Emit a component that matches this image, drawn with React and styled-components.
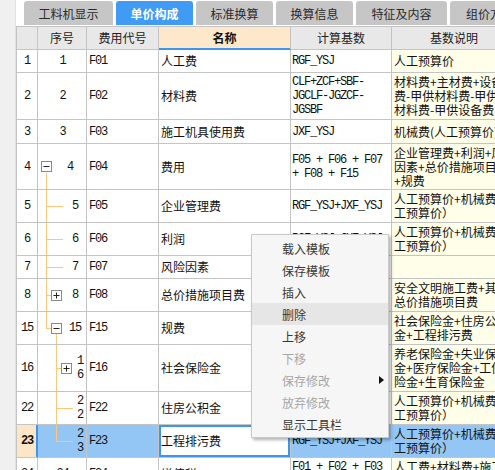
import React from 'react';
import styled, { createGlobalStyle, css } from 'styled-components';

const LINE = '#c4c4c4';
const TREE = '#fcc777';
const BLUE = '#3d95ee';
const MONO = '"Liberation Mono", "DejaVu Sans Mono", monospace';
const CJK = '"Noto Sans CJK SC", "Noto Sans", sans-serif';

const GlobalStyle = createGlobalStyle`
  html, body { margin: 0; padding: 0; background: #fff; }
  body { font-family: ${CJK}; font-size: 12px; color: #111; }
  * { box-sizing: border-box; }
`;

const Page = styled.div`
  position: relative;
  width: 495px;
  height: 470px;
  overflow: hidden;
  display: flex;
  background: #fff;
  font-family: ${CJK};
  font-size: 12px;
  color: #111;
`;

const Side = styled.div`
  flex: none;
  width: 16px;
  background: #f0f0f0;
  border-right: 1px solid #e3e3e3;
`;

const Main = styled.div`
  flex: 1;
  min-width: 0;
  overflow: hidden;
  display: flex;
  flex-direction: column;
`;

const TabBar = styled.div`
  flex: none;
  height: 26px;
  display: flex;
  gap: 3px;
  padding: 1px 0 1px 8px;
`;

const Tab = styled.div`
  flex: none;
  width: ${p => p.$w}px;
  display: flex;
  align-items: center;
  justify-content: center;
  white-space: nowrap;
  border-radius: 3px 3px 0 0;
  background: ${p => (p.$active ? '#3f9bf4' : '#c6c6c6')};
  color: ${p => (p.$active ? '#fff' : '#2a2a2a')};
  font-weight: ${p => (p.$active ? 700 : 400)};
`;

const Grid = styled.div`
  flex: none;
  width: max-content;
  border-top: 1px solid ${LINE};
  border-left: 1px solid ${LINE};
`;

const Row = styled.div`
  display: grid;
  grid-template-columns: 21px 49px 72px 132px 101px 125px;
  height: ${p => p.$h}px;
  background: ${p => (p.$selected ? '#93c6f4' : '#fff')};
`;

const Cell = styled.div`
  min-width: 0;
  overflow: hidden;
  display: flex;
  align-items: center;
  border-right: 1px solid ${LINE};
  border-bottom: 1px solid ${LINE};
  line-height: 14px;
`;

const HeadCell = styled(Cell)`
  justify-content: center;
  background: #e8e8e8;
  color: #222;
  ${p =>
    p.$focus &&
    css`
      background: #fde8cb;
      font-weight: 700;
      color: #111;
      border-bottom-color: ${BLUE};
      box-shadow: inset 0 -1px 0 ${BLUE};
    `}
`;

const monoText = css`
  font-family: ${MONO};
  font-size: 12px;
  letter-spacing: -1.2px;
`;

const RowNumCell = styled(Cell)`
  justify-content: center;
  ${monoText}
  ${p =>
    p.$selected &&
    css`
      background: #fde6c6;
      font-weight: 700;
      border-right-color: ${BLUE};
      box-shadow: inset -1px 0 0 ${BLUE};
    `}
`;

const SeqCell = styled(Cell)`
  align-items: stretch;
  padding-left: ${p => (p.$tree ? 3 : 0)}px;
  ${monoText}
`;

const Guide = styled.span`
  position: relative;
  flex: none;
  width: 10px;
  &::before {
    content: '';
    position: absolute;
    left: 5px;
    top: 0;
    width: 1px;
    height: ${p => (p.$line === 'full' ? '100%' : p.$line === 'half' ? '50%' : '0')};
    background: ${TREE};
  }
  &::after {
    content: '';
    display: ${p => (p.$branch ? 'block' : 'none')};
    position: absolute;
    left: 5px;
    right: 0;
    top: 50%;
    height: 1px;
    background: ${TREE};
  }
`;

const Stub = styled.span`
  position: relative;
  flex: none;
  width: 12px;
  &::after {
    content: '';
    position: absolute;
    left: 0;
    right: 0;
    top: 50%;
    height: 1px;
    background: ${TREE};
  }
`;

const ToggleSlot = styled.span`
  position: relative;
  flex: none;
  width: 10px;
  margin-right: 2px;
  display: flex;
  align-items: center;
  &::after {
    content: '';
    display: ${p => (p.$open ? 'block' : 'none')};
    position: absolute;
    left: 5px;
    top: calc(50% + 6px);
    bottom: 0;
    width: 1px;
    background: ${TREE};
  }
  svg {
    flex: none;
    display: block;
  }
`;

const Num = styled.span`
  flex: 1;
  min-width: 0;
  align-self: center;
  text-align: center;
  word-break: break-all;
  padding: 0 2px 0 3px;
  line-height: 14px;
`;

const CodeCell = styled(Cell)`
  padding-left: 2px;
  ${monoText}
`;

const NameCell = styled(Cell)`
  padding-left: 2px;
  white-space: nowrap;
  ${p =>
    p.$focus &&
    css`
      background: #fff;
      box-shadow: inset 0 0 0 2px ${BLUE};
    `}
`;

const CalcCell = styled(Cell)`
  padding-left: 1px;
  ${monoText}
  span {
    display: block;
  }
`;

const DescCell = styled(Cell)`
  flex-direction: column;
  align-items: flex-start;
  justify-content: center;
  padding-left: 2px;
  background: ${p => (p.$selected ? 'transparent' : '#fffee9')};
`;

const DescLine = styled.span`
  white-space: nowrap;
`;

const Menu = styled.ul`
  position: absolute;
  left: 251px;
  top: 234px;
  width: 138px;
  margin: 0;
  padding: 2px 0;
  list-style: none;
  background: #f6f6f6;
  border: 1px solid #c9c9c9;
  box-shadow: 2px 2px 3px rgba(0, 0, 0, 0.3);
`;

const MenuItem = styled.li`
  height: 22px;
  display: flex;
  align-items: center;
  padding: 0 4px 0 30px;
  white-space: nowrap;
  color: ${p => (p.$disabled ? '#a6a6a6' : '#383838')};
  background: ${p => (p.$hover ? '#e6e6e6' : 'transparent')};
  svg {
    margin-left: auto;
    display: block;
  }
`;

const tabs = [
  { label: '工料机显示', w: 89 },
  { label: '单价构成', w: 77, active: true },
  { label: '标准换算', w: 77 },
  { label: '换算信息', w: 77 },
  { label: '特征及内容', w: 91 },
  { label: '组价方案', w: 80 },
];

const mixDesc = ['人工预算价+机械费(人', '工预算价）'];
const mixCalc = 'RGF_YSJ+JXF_YSJ';

const rows = [
  { n: '1', code: 'F01', name: '人工费', calc: 'RGF_YSJ', desc: ['人工预算价'], h: 23 },
  {
    n: '2', code: 'F02', name: '材料费', calc: 'CLF+ZCF+SBF-JGCLF-JGZCF-JGSBF',
    desc: ['材料费+主材费+设备', '费-甲供材料费-甲供主', '材料费-甲供设备费'], h: 47,
  },
  { n: '3', code: 'F03', name: '施工机具使用费', calc: 'JXF_YSJ', desc: ['机械费(人工预算价)'], h: 24 },
  {
    n: '4', code: 'F04', name: '费用', calc: 'F05 + F06 + F07 + F08 + F15',
    desc: ['企业管理费+利润+风险', '因素+总价措施项目费', '+规费'], h: 46,
    tree: { guides: [], toggle: 'open' },
  },
  { n: '5', code: 'F05', name: '企业管理费', calc: mixCalc, desc: mixDesc, h: 33, tree: { guides: ['full'], leaf: true } },
  { n: '6', code: 'F06', name: '利润', calc: mixCalc, desc: mixDesc, h: 33, tree: { guides: ['full'], leaf: true } },
  { n: '7', code: 'F07', name: '风险因素', calc: '', desc: [], h: 23, tree: { guides: ['full'], leaf: true } },
  {
    n: '8', code: 'F08', name: '总价措施项目费', calc: 'F09 + F10',
    desc: ['安全文明施工费+其他', '总价措施项目费'], h: 33, tree: { guides: ['full'], toggle: 'closed' },
  },
  {
    n: '15', code: 'F15', name: '规费', calc: 'F16 + F22 + F23',
    desc: ['社会保险金+住房公积', '金+工程排污费'], h: 33, tree: { guides: ['half'], toggle: 'open' },
  },
  {
    n: '16', code: 'F16', name: '社会保险金', calc: 'F17 + F18 + F19 + F20 + F21',
    desc: ['养老保险金+失业保险', '金+医疗保险金+工伤保', '险金+生育保险金'], h: 47,
    tree: { guides: ['none', 'full'], toggle: 'closed' },
  },
  { n: '22', code: 'F22', name: '住房公积金', calc: mixCalc, desc: mixDesc, h: 33, tree: { guides: ['none', 'full'], leaf: true } },
  {
    n: '23', code: 'F23', name: '工程排污费', calc: mixCalc, desc: mixDesc, h: 33, selected: true,
    tree: { guides: ['none', 'half'], leaf: true },
  },
  {
    n: '24', code: 'F24', name: '增值税', calc: 'F01 + F02 + F03 + F04',
    desc: ['人工费+材料费+施工', '机具使用费+费用'], h: 33,
  },
];

const menuItems = [
  { label: '载入模板' },
  { label: '保存模板' },
  { label: '插入' },
  { label: '删除', hover: true },
  { label: '上移' },
  { label: '下移', disabled: true },
  { label: '保存修改', disabled: true, sub: true },
  { label: '放弃修改', disabled: true },
  { label: '显示工具栏' },
];

function ToggleBox({ open }) {
  return (
    <svg width="11" height="11" viewBox="0 0 11 11">
      <rect x="0.5" y="0.5" width="10" height="10" fill="#fff" stroke="#8a8a8a" />
      <path d="M2.5 5.5h6" stroke="#222" strokeWidth="1" />
      {!open && <path d="M5.5 2.5v6" stroke="#222" strokeWidth="1" />}
    </svg>
  );
}

function TreeSeq({ row }) {
  const t = row.tree;
  if (!t) {
    return (
      <SeqCell>
        <Num>{row.n}</Num>
      </SeqCell>
    );
  }
  return (
    <SeqCell $tree>
      {t.guides.map((g, i) => (
        <Guide key={i} $line={g} $branch={i === t.guides.length - 1 && g !== 'none'} />
      ))}
      {t.toggle && (
        <ToggleSlot $open={t.toggle === 'open'}>
          <ToggleBox open={t.toggle === 'open'} />
        </ToggleSlot>
      )}
      {t.leaf && <Stub />}
      <Num>{row.n}</Num>
    </SeqCell>
  );
}

function SubArrow() {
  return (
    <svg width="5" height="8" viewBox="0 0 5 8">
      <path d="M0 0L5 4L0 8Z" fill="#111" />
    </svg>
  );
}

export default function App() {
  return (
    <>
      <GlobalStyle />
      <Page>
        <Side />
        <Main>
          <TabBar>
            {tabs.map(t => (
              <Tab key={t.label} $w={t.w} $active={t.active}>
                {t.label}
              </Tab>
            ))}
          </TabBar>
          <Grid>
            <Row $h={23}>
              <HeadCell />
              <HeadCell>序号</HeadCell>
              <HeadCell>费用代号</HeadCell>
              <HeadCell $focus>名称</HeadCell>
              <HeadCell>计算基数</HeadCell>
              <HeadCell>基数说明</HeadCell>
            </Row>
            {rows.map(r => (
              <Row key={r.n} $h={r.h} $selected={r.selected}>
                <RowNumCell $selected={r.selected}>{r.n}</RowNumCell>
                <TreeSeq row={r} />
                <CodeCell>{r.code}</CodeCell>
                <NameCell $focus={r.selected}>{r.name}</NameCell>
                <CalcCell>
                  <span>{r.calc}</span>
                </CalcCell>
                <DescCell $selected={r.selected}>
                  {r.desc.map((d, i) => (
                    <DescLine key={i}>{d}</DescLine>
                  ))}
                </DescCell>
              </Row>
            ))}
          </Grid>
        </Main>
        <Menu>
          {menuItems.map(m => (
            <MenuItem key={m.label} $disabled={m.disabled} $hover={m.hover}>
              {m.label}
              {m.sub && <SubArrow />}
            </MenuItem>
          ))}
        </Menu>
      </Page>
    </>
  );
}
